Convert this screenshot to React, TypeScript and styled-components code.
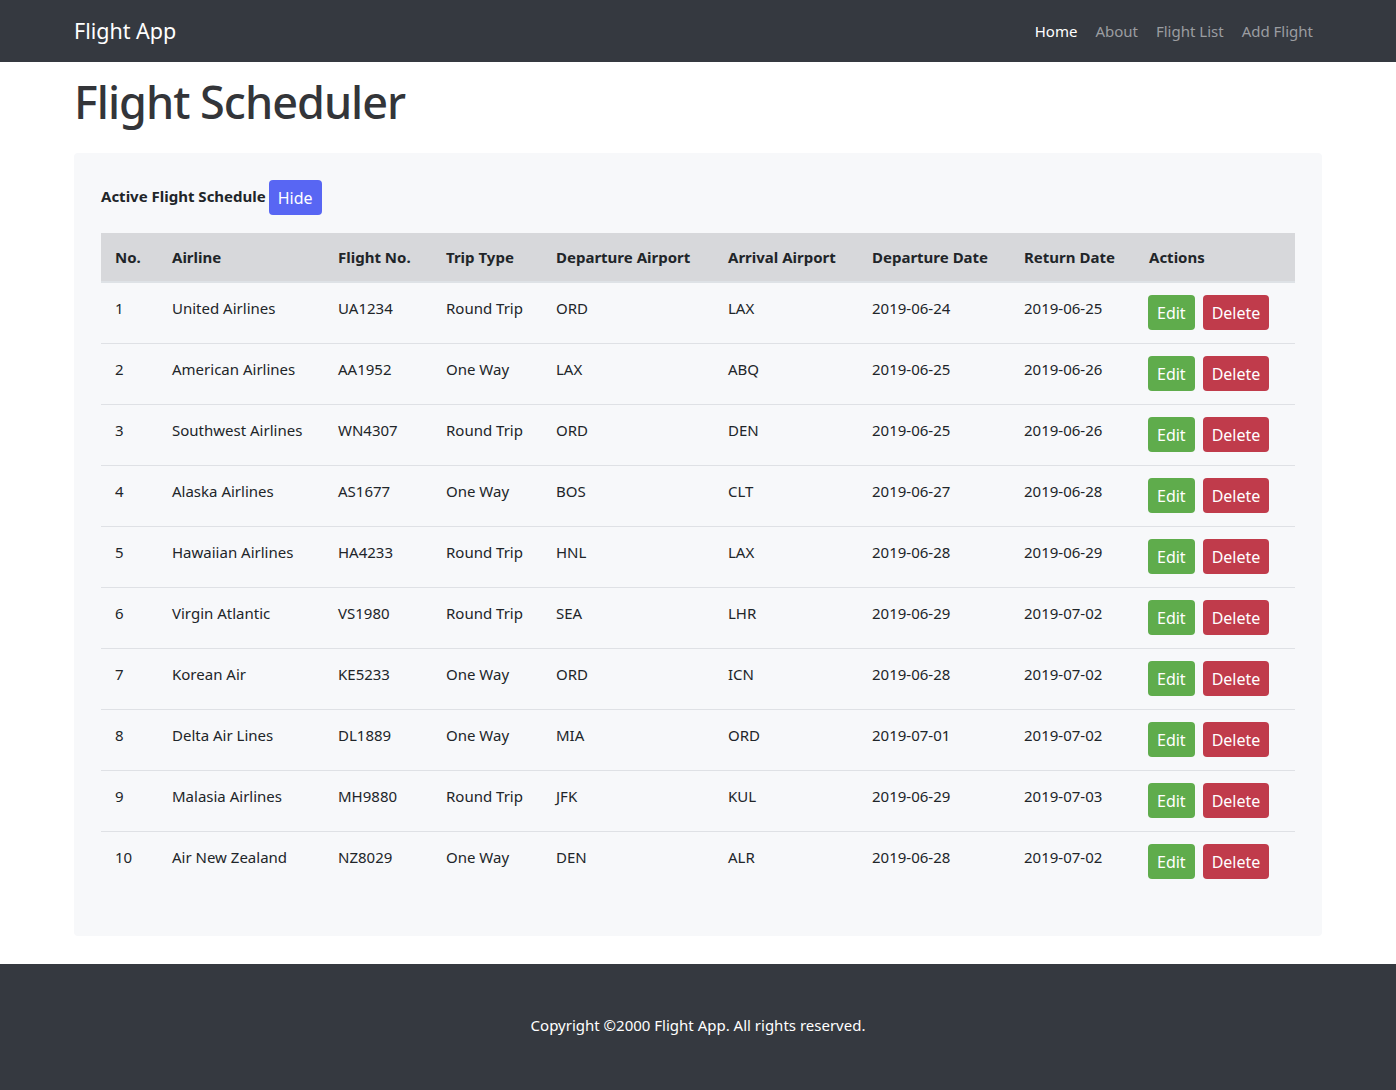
import React from "react";
import styled, { createGlobalStyle } from "styled-components";

const FONT = `"Noto Sans", "Open Sans", Roboto, sans-serif`;

const Global = createGlobalStyle`
  html, body { margin: 0; padding: 0; }
  body {
    font-family: ${FONT};
    font-size: 15px;
    line-height: 1.5;
    color: #212529;
    background: #ffffff;
  }
  #root { min-height: 1090px; display: flex; flex-direction: column; }
`;

const NavBar = styled.nav`
  height: 62px;
  background: #353940;
  display: flex;
  align-items: center;
  justify-content: space-between;
  padding: 0 83px 0 74px;
  box-sizing: border-box;
`;

const Brand = styled.a`
  color: #ffffff;
  font-size: 21.5px;
  line-height: 1;
  text-decoration: none;
`;

const NavLinks = styled.div`
  display: flex;
  gap: 18px;
`;

const NavLink = styled.a<{ $active?: boolean }>`
  color: ${(p) => (p.$active ? "#ffffff" : "#9b9da1")};
  font-size: 15px;
  text-decoration: none;
`;

const Main = styled.main`
  flex: 1;
  padding: 0 74px 27px;
`;

const Title = styled.h1`
  margin: 11px 0 23px;
  font-size: 45px;
  font-weight: 500;
  letter-spacing: -1px;
  line-height: 57px;
  color: #333539;
`;

const Panel = styled.section`
  background: #f7f8fa;
  border-radius: 4px;
  padding: 27px 27px 44px;
`;

const PanelHead = styled.div`
  display: flex;
  align-items: flex-start;
  gap: 3px;
  margin-bottom: 18px;
`;

const PanelTitle = styled.h2`
  margin: 4px 0 0;
  font-size: 15px;
  font-weight: 700;
  line-height: 24px;
  color: #212529;
`;

const Btn = styled.button<{ $color: string }>`
  font-family: ${FONT};
  font-size: 16px;
  line-height: 24px;
  height: 35px;
  padding: 0 9px;
  border: none;
  border-radius: 4px;
  color: #ffffff;
  background: ${(p) => p.$color};
  cursor: pointer;
`;

const Table = styled.table`
  width: 100%;
  border-collapse: collapse;
  table-layout: fixed;
`;

const HeadCell = styled.th`
  background: #d7d8db;
  text-align: left;
  font-weight: 700;
  padding: 12px 12px 12px 14px;
  line-height: 24px;
  border-bottom: 2px solid #dee2e6;
  color: #212529;
`;

const Row = styled.tr`
  & + & td { border-top: 1px solid #dfe1e5; }
`;

const Cell = styled.td`
  padding: 13px 12px 12px 14px;
  line-height: 24px;
  vertical-align: top;
  color: #212529;
  white-space: nowrap;
`;

const ActionCell = styled(Cell)`
  padding: 12px 12px 13px 13px;
`;

const Actions = styled.div`
  display: flex;
  gap: 8px;
`;

const Footer = styled.footer`
  height: 126px;
  box-sizing: border-box;
  padding-bottom: 3px;
  background: #353940;
  color: #ffffff;
  display: flex;
  align-items: center;
  justify-content: center;
  font-size: 15px;
`;

const cols = [57, 166, 108, 110, 172, 144, 152, 125, 160];
const heads = [
  "No.",
  "Airline",
  "Flight No.",
  "Trip Type",
  "Departure Airport",
  "Arrival Airport",
  "Departure Date",
  "Return Date",
  "Actions",
];

const flights = [
  ["1", "United Airlines", "UA1234", "Round Trip", "ORD", "LAX", "2019-06-24", "2019-06-25"],
  ["2", "American Airlines", "AA1952", "One Way", "LAX", "ABQ", "2019-06-25", "2019-06-26"],
  ["3", "Southwest Airlines", "WN4307", "Round Trip", "ORD", "DEN", "2019-06-25", "2019-06-26"],
  ["4", "Alaska Airlines", "AS1677", "One Way", "BOS", "CLT", "2019-06-27", "2019-06-28"],
  ["5", "Hawaiian Airlines", "HA4233", "Round Trip", "HNL", "LAX", "2019-06-28", "2019-06-29"],
  ["6", "Virgin Atlantic", "VS1980", "Round Trip", "SEA", "LHR", "2019-06-29", "2019-07-02"],
  ["7", "Korean Air", "KE5233", "One Way", "ORD", "ICN", "2019-06-28", "2019-07-02"],
  ["8", "Delta Air Lines", "DL1889", "One Way", "MIA", "ORD", "2019-07-01", "2019-07-02"],
  ["9", "Malasia Airlines", "MH9880", "Round Trip", "JFK", "KUL", "2019-06-29", "2019-07-03"],
  ["10", "Air New Zealand", "NZ8029", "One Way", "DEN", "ALR", "2019-06-28", "2019-07-02"],
];

export default function App() {
  return (
    <>
      <Global />
      <NavBar>
        <Brand href="#">Flight App</Brand>
        <NavLinks>
          <NavLink $active href="#">Home</NavLink>
          <NavLink href="#">About</NavLink>
          <NavLink href="#">Flight List</NavLink>
          <NavLink href="#">Add Flight</NavLink>
        </NavLinks>
      </NavBar>
      <Main>
        <Title>Flight Scheduler</Title>
        <Panel>
          <PanelHead>
            <PanelTitle>Active Flight Schedule</PanelTitle>
            <Btn $color="#5866f3">Hide</Btn>
          </PanelHead>
          <Table>
            <colgroup>
              {cols.map((w, i) => (
                <col key={i} style={{ width: w }} />
              ))}
            </colgroup>
            <thead>
              <tr>
                {heads.map((h) => (
                  <HeadCell key={h}>{h}</HeadCell>
                ))}
              </tr>
            </thead>
            <tbody>
              {flights.map((f) => (
                <Row key={f[0]}>
                  {f.map((v, i) => (
                    <Cell key={i}>{v}</Cell>
                  ))}
                  <ActionCell>
                    <Actions>
                      <Btn $color="#5fac4c">Edit</Btn>
                      <Btn $color="#c03b4b">Delete</Btn>
                    </Actions>
                  </ActionCell>
                </Row>
              ))}
            </tbody>
          </Table>
        </Panel>
      </Main>
      <Footer>Copyright ©2000 Flight App. All rights reserved.</Footer>
    </>
  );
}
